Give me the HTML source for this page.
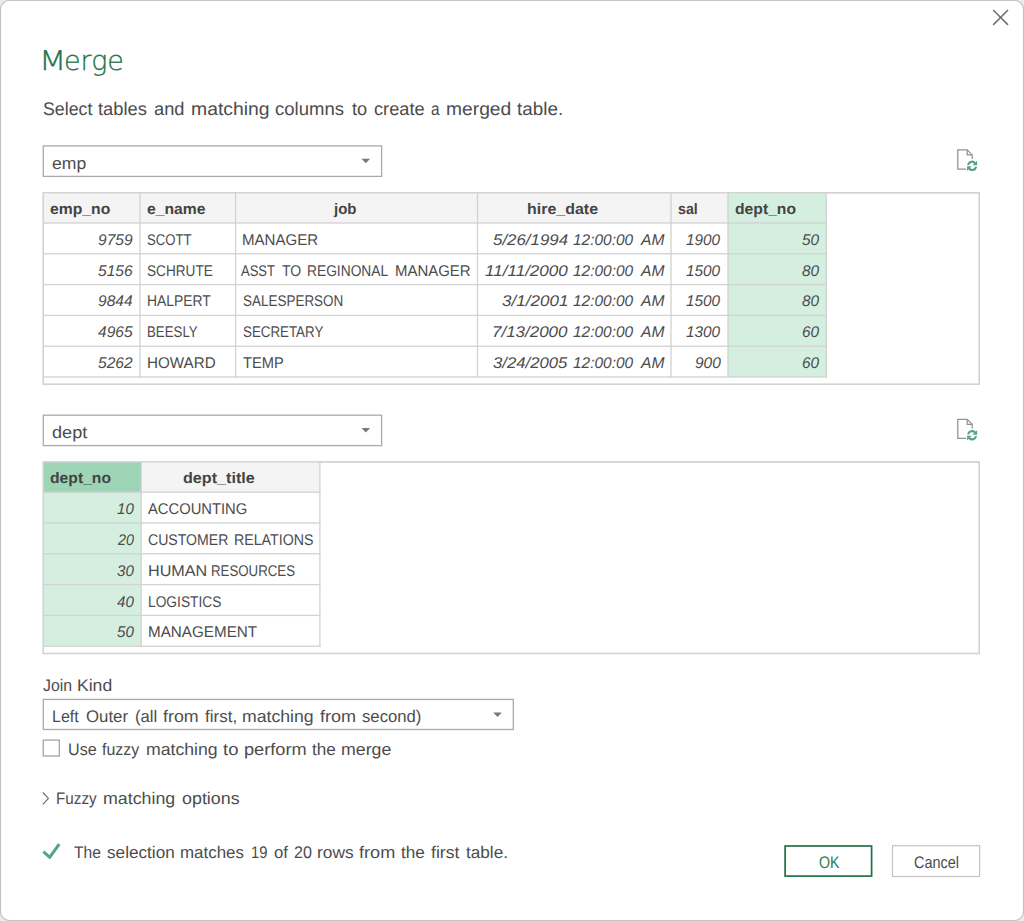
<!DOCTYPE html>
<html><head><meta charset="utf-8"><title>Merge</title>
<style>
html,body{margin:0;padding:0;}
body{width:1024px;height:921px;background:#ebebeb;position:relative;overflow:hidden;font-family:"Liberation Sans", sans-serif;color:#4c4c4c;text-rendering:geometricPrecision;}
.abs{position:absolute;}
h1,p{margin:0;font:inherit;}
.t{position:absolute;white-space:nowrap;line-height:normal;transform-origin:0 0;}
.w{display:inline-block;transform-origin:0 0;}
</style></head>
<body>
<svg class="abs" style="left:0;top:0" width="1024" height="921" viewBox="0 0 1024 921">
<rect x="0.5" y="0.5" width="1023" height="920" rx="9" ry="9" fill="#fff" stroke="#c4c4c4" stroke-width="1.2"/>
<path d="M993.2 10 L1008 24.9 M1008 10 L993.2 24.9" stroke="#6e6e6e" stroke-width="1.5" fill="none"/>
<rect x="43.3" y="145.9" width="338.3" height="30.5" fill="#fff" stroke="#aaaaaa" stroke-width="1.3"/>
<path d="M361.5 158.7 H370.1 L365.8 163.3 Z" fill="#787878"/>
<g transform="translate(957.8 149.9)">
<path d="M8.3 19.2 H0 V0 H9.4 L14.4 5 V9.2 M9.4 0 V5 H14.4" stroke="#929292" stroke-width="1.25" fill="none"/>
<g transform="translate(0 0.45)"><g fill="none" stroke="#56a085" stroke-width="2.15"><path d="M10.3 14.6 A4 4 0 0 1 17.3 12.8"/><path d="M18.3 16.4 A4 4 0 0 1 11.3 18.2"/></g>
<path d="M19.3 10.4 V15 H14.7 Z M9.3 20.6 V16 H13.9 Z" fill="#56a085"/></g>
</g>
<rect x="43.3" y="192.75" width="936" height="191.55" fill="#fff" stroke="#d2d2d2" stroke-width="1.3"/>
<rect x="43.3" y="192.75" width="782.95" height="30.25" fill="#f4f4f4"/>
<rect x="728" y="192.75" width="98.25" height="184.25" fill="#d4efe0"/>
<rect x="43.3" y="222.35" width="783.6" height="1.3" fill="#d2d2d2"/>
<rect x="43.3" y="253.15" width="783.6" height="1.3" fill="#d2d2d2"/>
<rect x="43.3" y="283.95" width="783.6" height="1.3" fill="#d2d2d2"/>
<rect x="43.3" y="314.75" width="783.6" height="1.3" fill="#d2d2d2"/>
<rect x="43.3" y="345.55" width="783.6" height="1.3" fill="#d2d2d2"/>
<rect x="43.3" y="376.35" width="783.6" height="1.3" fill="#d2d2d2"/>
<rect x="139.25" y="192.75" width="1.3" height="184.9" fill="#d2d2d2"/>
<rect x="234.95" y="192.75" width="1.3" height="184.9" fill="#d2d2d2"/>
<rect x="476.85" y="192.75" width="1.3" height="184.9" fill="#d2d2d2"/>
<rect x="670.35" y="192.75" width="1.3" height="184.9" fill="#d2d2d2"/>
<rect x="727.35" y="192.75" width="1.3" height="184.9" fill="#d2d2d2"/>
<rect x="825.6" y="192.75" width="1.3" height="184.9" fill="#d2d2d2"/>
<rect x="43.3" y="192.75" width="936" height="191.55" fill="none" stroke="#d2d2d2" stroke-width="1.3"/>
<rect x="43.3" y="415.2" width="338.3" height="30.4" fill="#fff" stroke="#aaaaaa" stroke-width="1.3"/>
<path d="M361.5 428 H370.1 L365.8 432.6 Z" fill="#787878"/>
<g transform="translate(957.8 419.3)">
<path d="M8.3 19.2 H0 V0 H9.4 L14.4 5 V9.2 M9.4 0 V5 H14.4" stroke="#929292" stroke-width="1.25" fill="none"/>
<g transform="translate(0 0.45)"><g fill="none" stroke="#56a085" stroke-width="2.15"><path d="M10.3 14.6 A4 4 0 0 1 17.3 12.8"/><path d="M18.3 16.4 A4 4 0 0 1 11.3 18.2"/></g>
<path d="M19.3 10.4 V15 H14.7 Z M9.3 20.6 V16 H13.9 Z" fill="#56a085"/></g>
</g>
<rect x="43.3" y="461.95" width="936" height="191.55" fill="#fff" stroke="#d2d2d2" stroke-width="1.3"/>
<rect x="43.3" y="461.95" width="276.6" height="30.25" fill="#f4f4f4"/>
<rect x="43.3" y="461.95" width="97.9" height="184.25" fill="#d4efe0"/>
<rect x="43.3" y="461.95" width="97.9" height="30.25" fill="#9dd5b6"/>
<rect x="43.3" y="491.55" width="277.25" height="1.3" fill="#d2d2d2"/>
<rect x="43.3" y="522.35" width="277.25" height="1.3" fill="#d2d2d2"/>
<rect x="43.3" y="553.15" width="277.25" height="1.3" fill="#d2d2d2"/>
<rect x="43.3" y="583.95" width="277.25" height="1.3" fill="#d2d2d2"/>
<rect x="43.3" y="614.75" width="277.25" height="1.3" fill="#d2d2d2"/>
<rect x="43.3" y="645.55" width="277.25" height="1.3" fill="#d2d2d2"/>
<rect x="140.55" y="461.95" width="1.3" height="184.9" fill="#d2d2d2"/>
<rect x="319.25" y="461.95" width="1.3" height="184.9" fill="#d2d2d2"/>
<rect x="43.3" y="461.95" width="936" height="191.55" fill="none" stroke="#d2d2d2" stroke-width="1.3"/>
<rect x="43.3" y="699.4" width="470" height="30.1" fill="#fff" stroke="#aaaaaa" stroke-width="1.3"/>
<path d="M493.2 712.4 H501.8 L497.5 717 Z" fill="#787878"/>
<rect x="43.2" y="740.1" width="16.1" height="15.9" fill="#fff" stroke="#a4a4a4" stroke-width="1.3"/>
<path d="M42.9 792.5 L48.4 798.4 L42.9 804.3" stroke="#6c6c6c" stroke-width="1.15" fill="none"/>
<path d="M43.4 851.6 L49.7 857.3 L59.2 844.2" stroke="#54a385" stroke-width="3.1" fill="none"/>
<rect x="785.1" y="846" width="86.5" height="30.1" fill="#fff" stroke="#217346" stroke-width="1.7"/>
<rect x="892.5" y="845.7" width="87.1" height="30.8" fill="#fff" stroke="#c4c4c4" stroke-width="1.2"/>
</svg>
<main role="dialog" aria-label="Merge">
<h1><span class="t" style="left:0;top:45.75px;font-size:27.4px;font-weight:200;color:#217346;font-family:'DejaVu Sans','Liberation Sans',sans-serif;-webkit-text-stroke:0.3px #217346;"><span class="w" style="margin-left:39.27px;transform:scaleX(1.1562)">M</span><span class="w" style="margin-left:1.02px;transform:scaleX(0.9830)">erge</span></span></h1>
<p><span class="t" style="left:0;top:97.90px;font-size:18.3px;"><span class="w" style="margin-left:43.00px;transform:scaleX(0.9718)">Select</span> <span class="w" style="margin-left:-0.69px;transform:scaleX(1.0032)">tables</span> <span class="w" style="margin-left:2.22px;transform:scaleX(0.9988)">and</span> <span class="w" style="margin-left:0.65px;transform:scaleX(1.0596)">matching</span> <span class="w" style="margin-left:5.49px;transform:scaleX(1.0128)">columns</span> <span class="w" style="margin-left:3.04px;transform:scaleX(0.9948)">to</span> <span class="w" style="margin-left:1.87px;transform:scaleX(0.9972)">create</span> <span class="w" style="margin-left:1.39px;transform:scaleX(0.8400)">a</span> <span class="w" style="margin-left:-0.18px;transform:scaleX(1.0532)">merged</span> <span class="w" style="margin-left:3.67px;transform:scaleX(1.0334)">table.</span></span></p>
<div role="combobox"><span class="t" style="left:51.60px;top:153.60px;font-size:16.8px;transform:scaleX(1.0461)">emp</span></div>
<div role="table" aria-label="emp">
<div role="row"><span class="t" style="left:49.60px;top:200.60px;font-size:15.2px;font-weight:bold;color:#444444;transform:scaleX(1.0353)">emp_no</span> <span class="t" style="left:147.00px;top:200.60px;font-size:15.2px;font-weight:bold;color:#444444;transform:scaleX(1.0335)">e_name</span> <span class="t" style="left:333.99px;top:200.60px;font-size:15.2px;font-weight:bold;color:#444444;transform:scaleX(0.9895)">job</span> <span class="t" style="left:526.95px;top:200.60px;font-size:15.2px;font-weight:bold;color:#444444;transform:scaleX(1.0517)">hire_date</span> <span class="t" style="left:678.00px;top:200.60px;font-size:15.2px;font-weight:bold;color:#444444;transform:scaleX(0.9333)">sal</span> <span class="t" style="left:735.00px;top:200.60px;font-size:15.2px;font-weight:bold;color:#444444;transform:scaleX(1.0335)">dept_no</span></div>
<div role="row"><span class="t" style="left:98.00px;top:232.00px;font-size:15.5px;font-style:italic;transform:scaleX(1.0040)">9759</span> <span class="t" style="left:147.20px;top:232.00px;font-size:15.5px;transform:scaleX(0.8482)">SCOTT</span> <span class="t" style="left:241.53px;top:232.00px;font-size:15.5px;transform:scaleX(0.9718)">MANAGER</span> <span class="t" style="left:0;top:232.00px;font-size:15.5px;font-style:italic;"><span class="w" style="margin-left:492.50px;transform:scaleX(1.0889)">5/26/1994</span> <span class="w" style="margin-left:7.47px;transform:scaleX(0.9965)">12:00:00</span> <span class="w" style="margin-left:3.11px;transform:scaleX(1.0066)">AM</span></span> <span class="t" style="left:686.25px;top:232.00px;font-size:15.5px;font-style:italic;transform:scaleX(0.9896)">1900</span> <span class="t" style="left:802.00px;top:232.00px;font-size:15.5px;font-style:italic;transform:scaleX(0.9932)">50</span></div>
<div role="row"><span class="t" style="left:98.00px;top:262.70px;font-size:15.5px;font-style:italic;transform:scaleX(1.0040)">5156</span> <span class="t" style="left:147.20px;top:262.70px;font-size:15.5px;transform:scaleX(0.8782)">SCHRUTE</span> <span class="t" style="left:0;top:262.70px;font-size:15.5px;"><span class="w" style="margin-left:241.42px;transform:scaleX(0.8400)">ASST</span> <span class="w" style="margin-left:-4.71px;transform:scaleX(0.9062)">TO</span> <span class="w" style="margin-left:-0.35px;transform:scaleX(0.8889)">REGINONAL</span> <span class="w" style="margin-left:-7.80px;transform:scaleX(0.9653)">MANAGER</span></span> <span class="t" style="left:0;top:262.70px;font-size:15.5px;font-style:italic;"><span class="w" style="margin-left:484.64px;transform:scaleX(1.1000)">11/11/2000</span> <span class="w" style="margin-left:9.02px;transform:scaleX(0.9965)">12:00:00</span> <span class="w" style="margin-left:3.11px;transform:scaleX(1.0066)">AM</span></span> <span class="t" style="left:686.25px;top:262.70px;font-size:15.5px;font-style:italic;transform:scaleX(0.9896)">1500</span> <span class="t" style="left:802.00px;top:262.70px;font-size:15.5px;font-style:italic;transform:scaleX(0.9932)">80</span></div>
<div role="row"><span class="t" style="left:98.00px;top:293.40px;font-size:15.5px;font-style:italic;transform:scaleX(1.0040)">9844</span> <span class="t" style="left:146.81px;top:293.40px;font-size:15.5px;transform:scaleX(0.8948)">HALPERT</span> <span class="t" style="left:242.50px;top:293.40px;font-size:15.5px;transform:scaleX(0.8688)">SALESPERSON</span> <span class="t" style="left:0;top:293.40px;font-size:15.5px;font-style:italic;"><span class="w" style="margin-left:502.16px;transform:scaleX(1.1000)">3/1/2001</span> <span class="w" style="margin-left:6.44px;transform:scaleX(0.9965)">12:00:00</span> <span class="w" style="margin-left:3.11px;transform:scaleX(1.0066)">AM</span></span> <span class="t" style="left:686.25px;top:293.40px;font-size:15.5px;font-style:italic;transform:scaleX(0.9896)">1500</span> <span class="t" style="left:802.00px;top:293.40px;font-size:15.5px;font-style:italic;transform:scaleX(0.9932)">80</span></div>
<div role="row"><span class="t" style="left:98.00px;top:324.10px;font-size:15.5px;font-style:italic;transform:scaleX(1.0040)">4965</span> <span class="t" style="left:146.84px;top:324.10px;font-size:15.5px;transform:scaleX(0.8561)">BEESLY</span> <span class="t" style="left:242.50px;top:324.10px;font-size:15.5px;transform:scaleX(0.8605)">SECRETARY</span> <span class="t" style="left:0;top:324.10px;font-size:15.5px;font-style:italic;"><span class="w" style="margin-left:492.16px;transform:scaleX(1.0939)">7/13/2000</span> <span class="w" style="margin-left:7.82px;transform:scaleX(0.9965)">12:00:00</span> <span class="w" style="margin-left:3.11px;transform:scaleX(1.0066)">AM</span></span> <span class="t" style="left:686.25px;top:324.10px;font-size:15.5px;font-style:italic;transform:scaleX(0.9896)">1300</span> <span class="t" style="left:802.00px;top:324.10px;font-size:15.5px;font-style:italic;transform:scaleX(0.9932)">60</span></div>
<div role="row"><span class="t" style="left:98.00px;top:354.80px;font-size:15.5px;font-style:italic;transform:scaleX(1.0040)">5262</span> <span class="t" style="left:146.72px;top:354.80px;font-size:15.5px;transform:scaleX(0.9806)">HOWARD</span> <span class="t" style="left:242.50px;top:354.80px;font-size:15.5px;transform:scaleX(0.9481)">TEMP</span> <span class="t" style="left:0;top:354.80px;font-size:15.5px;font-style:italic;"><span class="w" style="margin-left:493.25px;transform:scaleX(1.0781)">3/24/2005</span> <span class="w" style="margin-left:6.72px;transform:scaleX(0.9965)">12:00:00</span> <span class="w" style="margin-left:3.11px;transform:scaleX(1.0066)">AM</span></span> <span class="t" style="left:694.50px;top:354.80px;font-size:15.5px;font-style:italic;transform:scaleX(1.0004)">900</span> <span class="t" style="left:802.00px;top:354.80px;font-size:15.5px;font-style:italic;transform:scaleX(0.9932)">60</span></div>
</div>
<div role="combobox"><span class="t" style="left:51.60px;top:423.20px;font-size:16.8px;transform:scaleX(1.0788)">dept</span></div>
<div role="table" aria-label="dept">
<div role="row"><span class="t" style="left:50.00px;top:470.20px;font-size:15.2px;font-weight:bold;color:#444444;transform:scaleX(1.0335)">dept_no</span> <span class="t" style="left:183.25px;top:470.20px;font-size:15.2px;font-weight:bold;color:#444444;transform:scaleX(1.0625)">dept_title</span></div>
<div role="row"><span class="t" style="left:117.30px;top:501.30px;font-size:15.5px;font-style:italic;transform:scaleX(0.9761)">10</span> <span class="t" style="left:148.20px;top:501.30px;font-size:15.5px;transform:scaleX(0.9521)">ACCOUNTING</span></div>
<div role="row"><span class="t" style="left:118.22px;top:532.00px;font-size:15.5px;font-style:italic;transform:scaleX(0.9237)">20</span> <span class="t" style="left:0;top:532.00px;font-size:15.5px;"><span class="w" style="margin-left:148.20px;transform:scaleX(0.9091)">CUSTOMER</span> <span class="w" style="margin-left:-6.84px;transform:scaleX(0.9161)">RELATIONS</span></span></div>
<div role="row"><span class="t" style="left:117.30px;top:562.80px;font-size:15.5px;font-style:italic;transform:scaleX(0.9761)">30</span> <span class="t" style="left:0;top:562.80px;font-size:15.5px;"><span class="w" style="margin-left:147.56px;transform:scaleX(1.0432)">HUMAN</span> <span class="w" style="margin-left:2.04px;transform:scaleX(0.8560)">RESOURCES</span></span></div>
<div role="row"><span class="t" style="left:117.30px;top:593.50px;font-size:15.5px;font-style:italic;transform:scaleX(0.9761)">40</span> <span class="t" style="left:147.61px;top:593.50px;font-size:15.5px;transform:scaleX(0.8876)">LOGISTICS</span></div>
<div role="row"><span class="t" style="left:117.30px;top:624.20px;font-size:15.5px;font-style:italic;transform:scaleX(0.9761)">50</span> <span class="t" style="left:147.52px;top:624.20px;font-size:15.5px;transform:scaleX(0.9826)">MANAGEMENT</span></div>
</div>
<label><span class="t" style="left:0;top:675.80px;font-size:16.8px;"><span class="w" style="margin-left:42.75px;transform:scaleX(0.9441)">Join</span> <span class="w" style="margin-left:-0.76px;transform:scaleX(1.0464)">Kind</span></span></label>
<div role="combobox"><span class="t" style="left:0;top:707.00px;font-size:16.8px;"><span class="w" style="margin-left:51.85px;transform:scaleX(0.9514)">Left</span> <span class="w" style="margin-left:1.49px;transform:scaleX(1.0004)">Outer</span> <span class="w" style="margin-left:1.86px;transform:scaleX(0.9928)">(all</span> <span class="w" style="margin-left:1.24px;transform:scaleX(1.0619)">from</span> <span class="w" style="margin-left:3.48px;transform:scaleX(1.0151)">first,</span> <span class="w" style="margin-left:0.78px;transform:scaleX(1.0530)">matching</span> <span class="w" style="margin-left:5.10px;transform:scaleX(1.0772)">from</span> <span class="w" style="margin-left:4.08px;transform:scaleX(0.9947)">second)</span></span></div>
<label><span class="t" style="left:0;top:740.40px;font-size:16.8px;"><span class="w" style="margin-left:67.84px;transform:scaleX(0.9611)">Use</span> <span class="w" style="margin-left:-0.35px;transform:scaleX(0.9478)">fuzzy</span> <span class="w" style="margin-left:0.11px;transform:scaleX(1.0530)">matching</span> <span class="w" style="margin-left:4.73px;transform:scaleX(1.1000)">to</span> <span class="w" style="margin-left:2.22px;transform:scaleX(1.0835)">perform</span> <span class="w" style="margin-left:5.39px;transform:scaleX(1.0176)">the</span> <span class="w" style="margin-left:1.14px;transform:scaleX(1.0577)">merge</span></span></label>
<div role="button" aria-expanded="false"><span class="t" style="left:0;top:789.00px;font-size:16.8px;"><span class="w" style="margin-left:55.59px;transform:scaleX(0.9073)">Fuzzy</span> <span class="w" style="margin-left:-2.08px;transform:scaleX(1.0598)">matching</span> <span class="w" style="margin-left:6.05px;transform:scaleX(1.0657)">options</span></span></div>
<div role="status"><span class="t" style="left:0;top:842.60px;font-size:16.8px;"><span class="w" style="margin-left:74.25px;transform:scaleX(0.9289)">The</span> <span class="w" style="margin-left:-0.83px;transform:scaleX(1.0228)">selection</span> <span class="w" style="margin-left:2.40px;transform:scaleX(1.0076)">matches</span> <span class="w" style="margin-left:2.74px;transform:scaleX(0.8827)">19</span> <span class="w" style="margin-left:-0.85px;transform:scaleX(0.9977)">of</span> <span class="w" style="margin-left:2.04px;transform:scaleX(0.9600)">20</span> <span class="w" style="margin-left:-0.57px;transform:scaleX(1.0341)">rows</span> <span class="w" style="margin-left:1.93px;transform:scaleX(1.0803)">from</span> <span class="w" style="margin-left:3.88px;transform:scaleX(1.0219)">the</span> <span class="w" style="margin-left:1.79px;transform:scaleX(1.0523)">first</span> <span class="w" style="margin-left:3.19px;transform:scaleX(1.0225)">table.</span></span></div>
<div role="button"><span class="t" style="left:818.70px;top:852.90px;font-size:16.8px;color:#2a7a52;transform:scaleX(0.8440)">OK</span></div>
<div role="button"><span class="t" style="left:913.80px;top:852.90px;font-size:16.8px;transform:scaleX(0.8620)">Cancel</span></div>
</main>
</body></html>
